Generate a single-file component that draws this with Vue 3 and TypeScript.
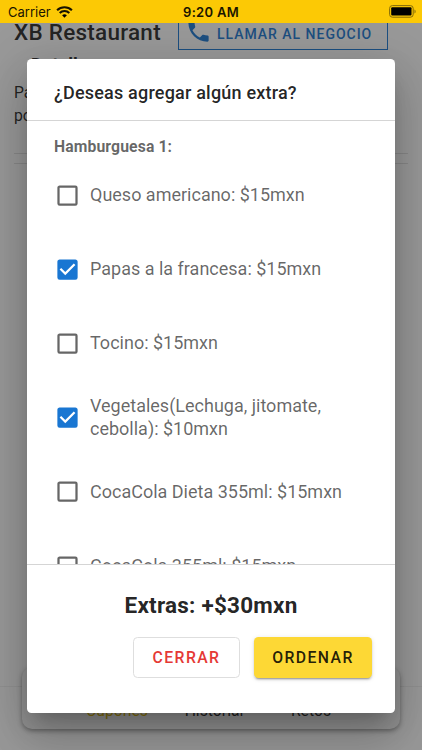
<script setup lang="ts">
import { computed, ref } from 'vue'

interface Extra {
  label: string
  price: number
  selected: boolean
}

const extras = ref<Extra[]>([
  { label: 'Queso americano', price: 15, selected: false },
  { label: 'Papas a la francesa', price: 15, selected: true },
  { label: 'Tocino', price: 15, selected: false },
  { label: 'Vegetales(Lechuga, jitomate, cebolla)', price: 10, selected: true },
  { label: 'CocaCola Dieta 355ml', price: 15, selected: false },
  { label: 'CocaCola 355ml', price: 15, selected: false },
])

const shownTotal = ref(30)
const totalText = computed(() => `Extras: +$${shownTotal.value}mxn`)

function toggle(extra: Extra) {
  extra.selected = !extra.selected
  shownTotal.value += extra.selected ? extra.price : -extra.price
}
</script>

<template>
  <div class="phone">
    <header class="status">
      <div class="carrier">
        <span>Carrier</span>
        <svg class="wifi" viewBox="0 0 17 12" width="17" height="12">
          <path d="M8.5 11.8 6.1 9.3a3.5 3.5 0 0 1 4.8 0z" />
          <path d="M3.7 6.9a6.9 6.9 0 0 1 9.6 0M1.1 4.2a10.6 10.6 0 0 1 14.8 0" fill="none" stroke="#171200" stroke-width="2.1" />
        </svg>
      </div>
      <span class="clock">9:20 AM</span>
      <svg class="battery" viewBox="0 0 28 13" width="28" height="13">
        <rect x=".6" y=".6" width="23.6" height="11.6" rx="2.8" fill="none" stroke="#836b08" stroke-width="1" />
        <rect x="2.2" y="2.2" width="20.3" height="8.4" rx="1" />
        <path d="M25.5 4.4c1.5.6 1.5 3.4 0 4z" fill="#836b08" />
      </svg>
    </header>

    <main class="page">
      <div class="shop">
        <h1>XB Restaurant</h1>
        <button class="call">
          <svg viewBox="0 0 24 24" width="27" height="27">
            <path d="M6.62 10.79c1.44 2.83 3.76 5.14 6.59 6.59l2.2-2.2c.27-.27.67-.36 1.02-.24 1.12.37 2.33.57 3.57.57.55 0 1 .45 1 1V20c0 .55-.45 1-1 1-9.39 0-17-7.61-17-17 0-.55.45-1 1-1h3.5c.55 0 1 .45 1 1 0 1.25.2 2.45.57 3.57.11.35.03.74-.25 1.02l-2.2 2.2z" />
          </svg>
          <span>Llamar al negocio</span>
        </button>
      </div>
      <h2>Detalles</h2>
      <p class="info">Pa<br />po</p>
      <hr />
      <hr />
    </main>

    <nav class="tabs">
      <div class="tab-card">
        <span class="tab active">Cupones</span>
        <span class="tab">Historial</span>
        <span class="tab">Retos</span>
      </div>
    </nav>

    <div class="scrim">
      <section class="dialog" role="dialog">
        <h3 class="title">¿Deseas agregar algún extra?</h3>
        <div class="body">
          <h4>Hamburguesa 1:</h4>
          <div v-for="extra in extras" :key="extra.label" class="option" @click="toggle(extra)">
            <svg class="box" :class="{ checked: extra.selected }" viewBox="0 0 24 24" width="27" height="27">
              <path v-if="extra.selected" d="M10 17l-5-5 1.41-1.42L10 14.17l7.59-7.59L19 8m0-5H5c-1.11 0-2 .89-2 2v14a2 2 0 0 0 2 2h14a2 2 0 0 0 2-2V5c0-1.11-.9-2-2-2z" />
              <path v-else d="M19 3H5c-1.11 0-2 .89-2 2v14a2 2 0 0 0 2 2h14a2 2 0 0 0 2-2V5a2 2 0 0 0-2-2m0 2v14H5V5h14z" />
            </svg>
            <span class="label">{{ extra.label }}: ${{ extra.price }}mxn</span>
          </div>
        </div>
        <footer class="footer">
          <div class="total">{{ totalText }}</div>
          <div class="actions">
            <button class="btn close">Cerrar</button>
            <button class="btn order">Ordenar</button>
          </div>
        </footer>
      </section>
    </div>
  </div>
</template>

<style>
body {
  margin: 0;
}
</style>

<style scoped>
* {
  box-sizing: border-box;
}
.phone {
  position: relative;
  display: flex;
  flex-direction: column;
  width: 422px;
  height: 750px;
  overflow: hidden;
  background: #fff;
  color: rgba(0, 0, 0, 0.87);
  font-family: Roboto, sans-serif;
}
h1, h2, h3, h4, p {
  margin: 0;
}
button {
  font-family: inherit;
}
.status {
  position: relative;
  z-index: 2;
  display: grid;
  grid-template-columns: 1fr auto 1fr;
  align-items: center;
  flex: none;
  height: 23px;
  padding: 0 5px 0 8px;
  background: #fcc905;
  color: #1a1500;
  font-family: Inter, sans-serif;
  font-size: 13px;
}
.carrier {
  display: flex;
  align-items: center;
  gap: 5px;
}
.clock {
  margin-right: 3px;
  font-weight: 600;
  letter-spacing: 0.3px;
}
.battery {
  justify-self: end;
}
.page {
  flex: 1;
  padding: 0 14px;
  overflow: hidden;
}
.shop {
  display: flex;
  align-items: flex-start;
  justify-content: space-between;
  height: 27px;
  padding-right: 20px;
}
h1 {
  margin-top: -5px;
  font-size: 22.5px;
  font-weight: 500;
  line-height: 28px;
  letter-spacing: 0.25px;
}
.call {
  display: flex;
  align-items: center;
  gap: 5px;
  width: 210px;
  height: 40px;
  margin-top: -13px;
  padding: 7px 0 0 6px;
  border: 1px solid #1976d2;
  background: none;
  color: #1976d2;
  fill: #1976d2;
  font-size: 14px;
  font-weight: 500;
  letter-spacing: 0.98px;
  text-transform: uppercase;
  white-space: nowrap;
}
.call svg {
  margin-top: -4px;
}
h2 {
  margin: 2px 0 0 17px;
  font-size: 18px;
  font-weight: 700;
  line-height: 26px;
}
.info {
  margin: 3px 0 26px;
  font-size: 15.75px;
  line-height: 23px;
}
hr {
  height: 1px;
  margin: 0 0 9px;
  border: 0;
  background: rgba(0, 0, 0, 0.12);
}
.tabs {
  flex: none;
  height: 64px;
  padding: 0 22px;
  border-top: 1px solid #f0f0f0;
}
.tab-card {
  display: grid;
  grid-template-columns: repeat(3, 97px);
  justify-content: center;
  align-items: end;
  height: 62px;
  margin-top: -20px;
  padding: 0 0 8px 6px;
  border-radius: 10px;
  background: #f5f5f5;
  box-shadow: 0 2px 5px rgba(0, 0, 0, 0.4);
  font-size: 15.75px;
  text-align: center;
}
.tab {
  line-height: 20px;
}
.tab.active {
  color: #d9b500;
}
.scrim {
  position: absolute;
  inset: 0;
  padding: 59px 27px 37px;
  background: rgba(33, 33, 33, 0.46);
}
.dialog {
  display: flex;
  flex-direction: column;
  height: 654px;
  overflow: hidden;
  border-radius: 4.5px;
  background: #fff;
  box-shadow: 0 12px 17px -8px rgba(0, 0, 0, 0.2), 0 27px 43px 3px rgba(0, 0, 0, 0.14), 0 10px 52px 9px rgba(0, 0, 0, 0.12);
}
.title {
  flex: none;
  height: 62px;
  padding: 18px 27px 0;
  border-bottom: 1px solid #d5d5d5;
  font-size: 18px;
  font-weight: 500;
  line-height: 32px;
  letter-spacing: 0.2px;
}
.body {
  flex: 1;
  min-height: 0;
  padding: 14px 27px 0;
  overflow: hidden;
  color: rgba(0, 0, 0, 0.6);
}
h4 {
  height: 23px;
  font-size: 15.75px;
  font-weight: 700;
  line-height: 23px;
  letter-spacing: 0.1px;
}
.option {
  display: flex;
  align-items: center;
  gap: 9px;
  height: 74.2px;
}
.box {
  flex: none;
  fill: rgba(0, 0, 0, 0.6);
}
.box.checked {
  fill: #1976d2;
}
.label {
  font-size: 18px;
  line-height: 22.5px;
}
.footer {
  flex: none;
  height: 149px;
  padding: 24px 23px 0;
  border-top: 1px solid #d5d5d5;
}
.total {
  font-size: 22.5px;
  font-weight: 700;
  line-height: 33px;
  letter-spacing: 0.22px;
  text-align: center;
}
.actions {
  display: flex;
  justify-content: flex-end;
  gap: 14px;
  margin-top: 15px;
}
.btn {
  height: 41px;
  padding: 0;
  border: 0;
  border-radius: 4.5px;
  font-size: 15.75px;
  font-weight: 500;
  letter-spacing: 1.4px;
  text-transform: uppercase;
}
.close {
  width: 107px;
  border: 1px solid #dedede;
  background: #fff;
  color: #e53935;
}
.order {
  width: 118px;
  background: #fdd835;
  color: rgba(0, 0, 0, 0.87);
  box-shadow: 0 3px 1px -2px rgba(0, 0, 0, 0.2), 0 2px 2px rgba(0, 0, 0, 0.14), 0 1px 5px rgba(0, 0, 0, 0.12);
}
</style>
